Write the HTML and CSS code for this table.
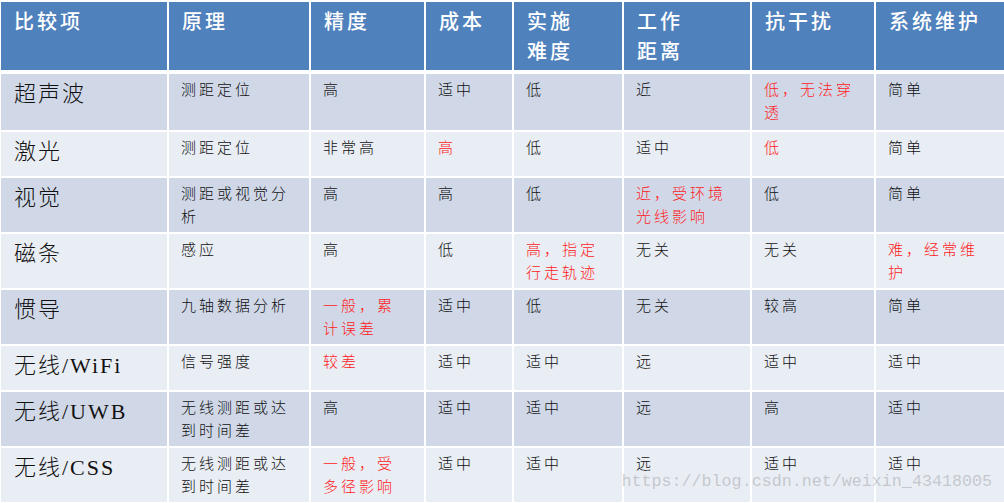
FILE: index.html
```html
<!DOCTYPE html>
<html lang="zh-CN">
<head>
<meta charset="utf-8">
<title>定位方式比较</title>
<link rel="stylesheet" href="styles.css">
</head>
<body>
<div class="sheet">
  <div class="grid">
    <div class="cell head">比较项</div>
    <div class="cell head">原理</div>
    <div class="cell head">精度</div>
    <div class="cell head">成本</div>
    <div class="cell head">实施<br>难度</div>
    <div class="cell head">工作<br>距离</div>
    <div class="cell head">抗干扰</div>
    <div class="cell head">系统维护</div>

    <div class="cell odd name">超声波</div>
    <div class="cell odd">测距定位</div>
    <div class="cell odd">高</div>
    <div class="cell odd">适中</div>
    <div class="cell odd">低</div>
    <div class="cell odd">近</div>
    <div class="cell odd warn">低，无法穿<br>透</div>
    <div class="cell odd">简单</div>

    <div class="cell even name">激光</div>
    <div class="cell even">测距定位</div>
    <div class="cell even">非常高</div>
    <div class="cell even warn">高</div>
    <div class="cell even">低</div>
    <div class="cell even">适中</div>
    <div class="cell even warn">低</div>
    <div class="cell even">简单</div>

    <div class="cell odd name">视觉</div>
    <div class="cell odd">测距或视觉分<br>析</div>
    <div class="cell odd">高</div>
    <div class="cell odd">高</div>
    <div class="cell odd">低</div>
    <div class="cell odd warn">近，受环境<br>光线影响</div>
    <div class="cell odd">低</div>
    <div class="cell odd">简单</div>

    <div class="cell even name">磁条</div>
    <div class="cell even">感应</div>
    <div class="cell even">高</div>
    <div class="cell even">低</div>
    <div class="cell even warn">高，指定<br>行走轨迹</div>
    <div class="cell even">无关</div>
    <div class="cell even">无关</div>
    <div class="cell even warn">难，经常维<br>护</div>

    <div class="cell odd name">惯导</div>
    <div class="cell odd">九轴数据分析</div>
    <div class="cell odd warn">一般，累<br>计误差</div>
    <div class="cell odd">适中</div>
    <div class="cell odd">低</div>
    <div class="cell odd">无关</div>
    <div class="cell odd">较高</div>
    <div class="cell odd">简单</div>

    <div class="cell even name">无线/WiFi</div>
    <div class="cell even">信号强度</div>
    <div class="cell even warn">较差</div>
    <div class="cell even">适中</div>
    <div class="cell even">适中</div>
    <div class="cell even">远</div>
    <div class="cell even">适中</div>
    <div class="cell even">适中</div>

    <div class="cell odd name">无线/UWB</div>
    <div class="cell odd">无线测距或达<br>到时间差</div>
    <div class="cell odd">高</div>
    <div class="cell odd">适中</div>
    <div class="cell odd">适中</div>
    <div class="cell odd">远</div>
    <div class="cell odd">高</div>
    <div class="cell odd">适中</div>

    <div class="cell even name">无线/CSS</div>
    <div class="cell even">无线测距或达<br>到时间差</div>
    <div class="cell even warn">一般，受<br>多径影响</div>
    <div class="cell even">适中</div>
    <div class="cell even">适中</div>
    <div class="cell even">远</div>
    <div class="cell even">适中</div>
    <div class="cell even">适中</div>
  </div>
  <div class="watermark">https://blog.csdn.net/weixin_43418005</div>
</div>
</body>
</html>
```

FILE: styles.css
```css
html, body {
  margin: 0;
  padding: 0;
  background: #ffffff;
}

.sheet {
  position: relative;
  width: 1004px;
  height: 503px;
  overflow: hidden;
  font-family: "Liberation Serif", "Noto Sans CJK SC", serif;
}

.grid {
  display: grid;
  grid-template-columns: 166px 140px 113px 86px 108px 126px 122px 128px;
  grid-template-rows: 70px 56px 44px 54px 54px 54px 44px 54px 54px;
  column-gap: 2px;
  row-gap: 2px;
  padding: 2px 0 0 1px;
}

.cell {
  box-sizing: border-box;
  padding: 5px 4px 0 12px;
  font-size: 15px;
  line-height: 23px;
  letter-spacing: 3px;
  color: #111111;
  font-weight: 300;
  white-space: nowrap;
}

.head {
  background: #4f81bd;
  color: #ffffff;
  font-size: 20px;
  line-height: 30px;
  letter-spacing: 3px;
  font-weight: 500;
  padding: 5px 4px 0 13px;
  margin-bottom: 2px;
}

.odd {
  background: #d0d8e8;
}

.even {
  background: #e9edf4;
}

.name {
  font-size: 22px;
  line-height: 30px;
  letter-spacing: 2px;
  padding-left: 13px;
  padding-top: 5px;
  font-weight: 300;
}

.warn {
  color: #ff1a1a;
}

.watermark {
  position: absolute;
  right: 12px;
  bottom: 11px;
  font-family: "Liberation Mono", monospace;
  font-size: 16.7px;
  line-height: 20px;
  color: rgba(150, 152, 158, 0.45);
  white-space: nowrap;
}
```
